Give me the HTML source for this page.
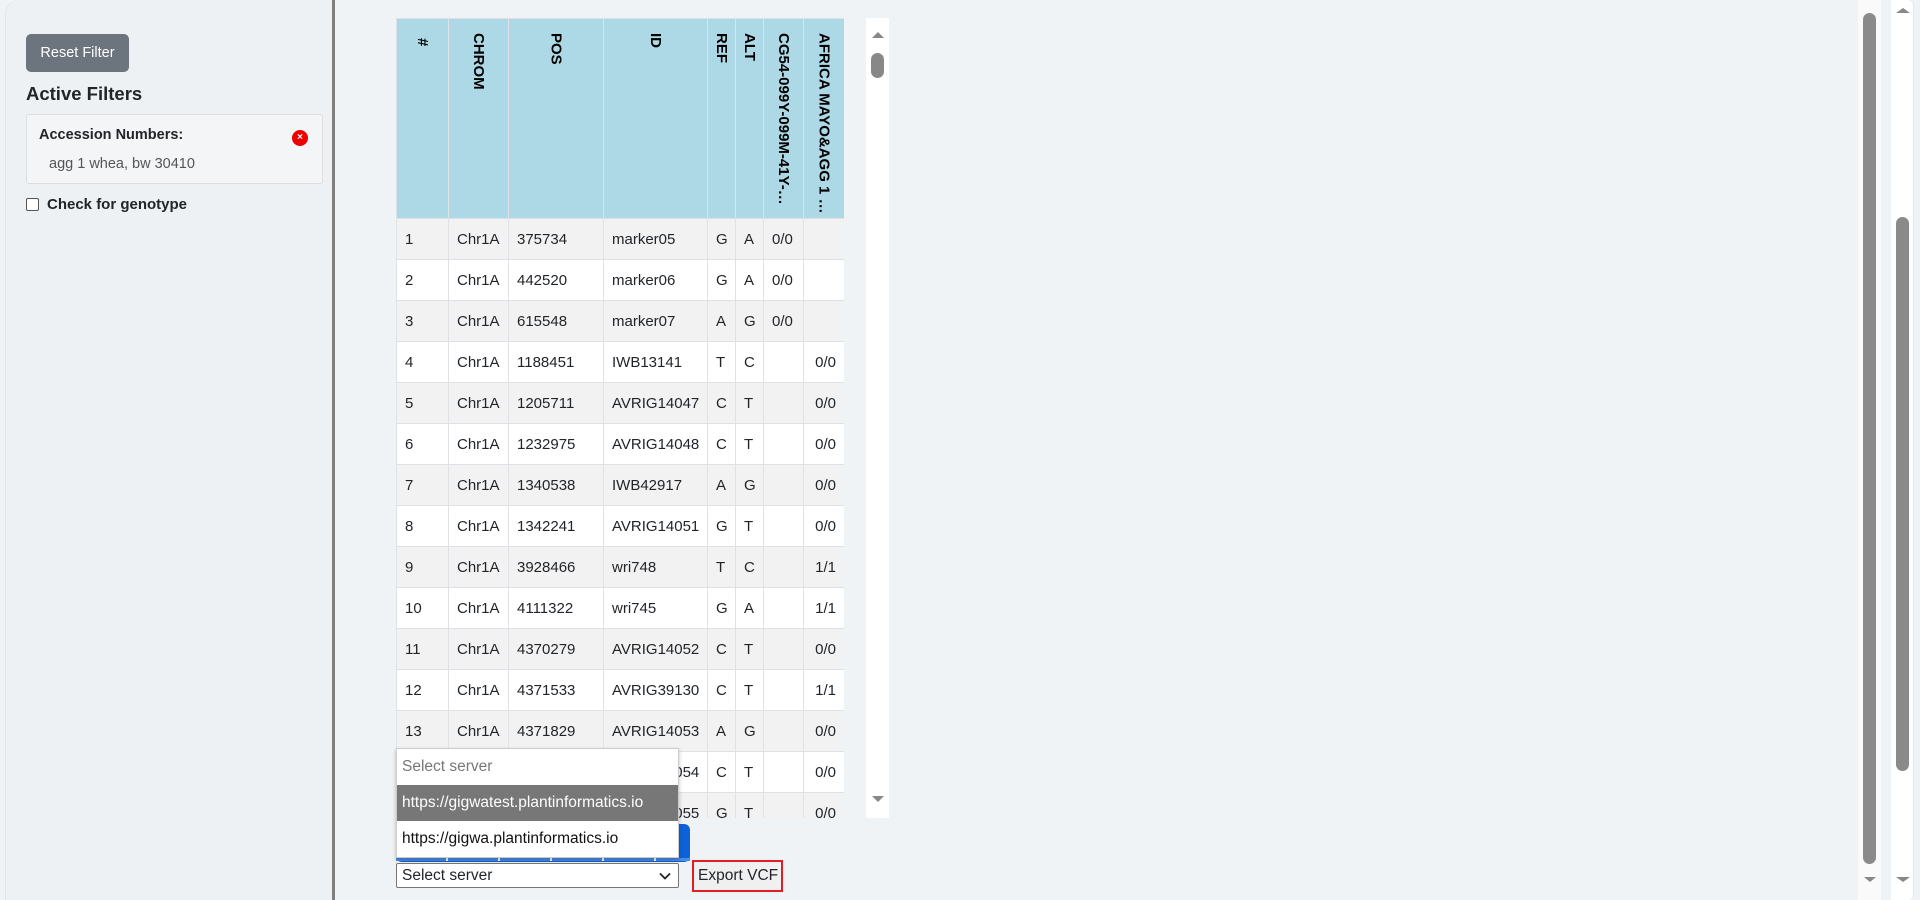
<!DOCTYPE html>
<html><head><meta charset="utf-8"><style>
*{box-sizing:border-box;margin:0;padding:0}
body{width:1920px;height:900px;background:#f0f3f5;font-family:"Liberation Sans",sans-serif;position:relative;overflow:hidden;color:#212529}
.abs{position:absolute}
.side{left:5px;top:0;width:328px;height:900px;background:#eef1f3;border-top-left-radius:14px;border-left:1px solid #e2e5e8}
.divider{left:332px;top:0;width:3px;height:900px;background:#808080}
.btn{left:26px;top:34px;width:103px;height:38px;background:#6c757d;border-radius:5px;color:#fff;font-size:14.5px;line-height:38px;text-align:center}
.card{left:26px;top:114px;width:297px;height:70px;background:#f4f5f6;border:1px solid #dcdfe2;border-radius:3px}
table{border-collapse:collapse;table-layout:fixed;font-size:15px}
td{height:41px;border:1px solid #dee2e6;padding:0 8px;white-space:nowrap;overflow:hidden;color:#212529}
tr:nth-child(even) td{background:#f2f2f2}
tr:nth-child(odd) td{background:#fff}
th{height:200px;background:#add8e6;border:1px solid #dee2e6;vertical-align:top;padding-top:14px;font-size:15px;font-weight:bold;color:#000}
th span{writing-mode:vertical-rl;display:inline-block;white-space:nowrap;max-height:182px;overflow:hidden}
</style></head><body>
<div class="abs side"></div>
<div class="abs divider"></div>
<div class="abs btn">Reset Filter</div>
<div class="abs" style="left:26px;top:83px;font-size:18.5px;font-weight:bold">Active Filters</div>
<div class="abs card"></div>
<div class="abs" style="left:39px;top:127px;font-size:14.5px;font-weight:bold">Accession Numbers:</div>
<div class="abs" style="left:292px;top:130px;width:16px;height:16px;border-radius:50%;background:#e00;color:#fff;font-size:10px;line-height:16px;text-align:center;font-weight:bold">×</div>
<div class="abs" style="left:49px;top:156px;font-size:14.5px;color:#555">agg 1 whea, bw 30410</div>
<div class="abs" style="left:26px;top:198px;width:13px;height:13px;border:1px solid #555;border-radius:2px;background:#fff"></div>
<div class="abs" style="left:47px;top:196px;font-size:15px;font-weight:bold">Check for genotype</div>

<div class="abs" style="left:396px;top:18px;width:448px;height:800px;overflow:hidden">
<table style="width:448px">
<colgroup><col style="width:52px"><col style="width:60px"><col style="width:95px"><col style="width:104px"><col style="width:28px"><col style="width:28px"><col style="width:40px"><col style="width:41px"></colgroup>
<tr><th><span>#</span></th><th><span>CHROM</span></th><th><span>POS</span></th><th><span>ID</span></th><th><span>REF</span></th><th><span>ALT</span></th><th><span>CG54-099Y-099M-41Y-…</span></th><th><span>AFRICA MAYO&amp;AGG 1 …</span></th></tr>
<tr><td>1</td><td>Chr1A</td><td>375734</td><td>marker05</td><td>G</td><td>A</td><td>0/0</td><td></td></tr>
<tr><td>2</td><td>Chr1A</td><td>442520</td><td>marker06</td><td>G</td><td>A</td><td>0/0</td><td></td></tr>
<tr><td>3</td><td>Chr1A</td><td>615548</td><td>marker07</td><td>A</td><td>G</td><td>0/0</td><td></td></tr>
<tr><td>4</td><td>Chr1A</td><td>1188451</td><td>IWB13141</td><td>T</td><td>C</td><td></td><td style="text-align:right">0/0</td></tr>
<tr><td>5</td><td>Chr1A</td><td>1205711</td><td>AVRIG14047</td><td>C</td><td>T</td><td></td><td style="text-align:right">0/0</td></tr>
<tr><td>6</td><td>Chr1A</td><td>1232975</td><td>AVRIG14048</td><td>C</td><td>T</td><td></td><td style="text-align:right">0/0</td></tr>
<tr><td>7</td><td>Chr1A</td><td>1340538</td><td>IWB42917</td><td>A</td><td>G</td><td></td><td style="text-align:right">0/0</td></tr>
<tr><td>8</td><td>Chr1A</td><td>1342241</td><td>AVRIG14051</td><td>G</td><td>T</td><td></td><td style="text-align:right">0/0</td></tr>
<tr><td>9</td><td>Chr1A</td><td>3928466</td><td>wri748</td><td>T</td><td>C</td><td></td><td style="text-align:right">1/1</td></tr>
<tr><td>10</td><td>Chr1A</td><td>4111322</td><td>wri745</td><td>G</td><td>A</td><td></td><td style="text-align:right">1/1</td></tr>
<tr><td>11</td><td>Chr1A</td><td>4370279</td><td>AVRIG14052</td><td>C</td><td>T</td><td></td><td style="text-align:right">0/0</td></tr>
<tr><td>12</td><td>Chr1A</td><td>4371533</td><td>AVRIG39130</td><td>C</td><td>T</td><td></td><td style="text-align:right">1/1</td></tr>
<tr><td>13</td><td>Chr1A</td><td>4371829</td><td>AVRIG14053</td><td>A</td><td>G</td><td></td><td style="text-align:right">0/0</td></tr>
<tr><td>14</td><td>Chr1A</td><td>4371954</td><td>AVRIG14054</td><td>C</td><td>T</td><td></td><td style="text-align:right">0/0</td></tr>
<tr><td>15</td><td>Chr1A</td><td>4372055</td><td>AVRIG14055</td><td>G</td><td>T</td><td></td><td style="text-align:right">0/0</td></tr>
</table></div>
<!-- inner scrollbar -->
<div class="abs" style="left:866px;top:18px;width:23px;height:800px;background:#fff"></div>
<div class="abs" style="left:872px;top:32px;width:0;height:0;border-left:6px solid transparent;border-right:6px solid transparent;border-bottom:6px solid #888"></div>
<div class="abs" style="left:871px;top:53px;width:13px;height:25px;border-radius:7px;background:#888"></div>
<div class="abs" style="left:872px;top:796px;width:0;height:0;border-left:6px solid transparent;border-right:6px solid transparent;border-top:6px solid #888"></div>

<!-- blue buttons behind -->
<div class="abs" style="left:396px;top:824px;width:294px;height:38px;background:#0d62d9;border-radius:6px"></div>
<div class="abs" style="left:396px;top:858px;width:294px;height:3px;background:repeating-linear-gradient(90deg,#4a8de8 0 50px,#fff 50px 52px)"></div>
<!-- dropdown -->
<div class="abs" style="left:396px;top:748px;width:283px;height:110px;background:#fff;border:1px solid #ccc;box-shadow:0 2px 4px rgba(0,0,0,.25);font-size:15.5px">
<div style="height:36px;line-height:36px;padding-left:5px;color:#777">Select server</div>
<div style="height:36px;line-height:36px;padding-left:5px;background:#777;color:#fff">https://gigwatest.plantinformatics.io</div>
<div style="height:36px;line-height:36px;padding-left:5px;color:#111">https://gigwa.plantinformatics.io</div>
</div>
<div class="abs" style="left:396px;top:863px;width:283px;height:25px;background:#fff;border:1px solid #767676;border-radius:2px;font-size:15.5px;line-height:23px;padding-left:5px">Select server<svg style="position:absolute;right:7px;top:8px" width="12" height="8" viewBox="0 0 12 8"><path d="M1 1.5L6 6.5L11 1.5" fill="none" stroke="#222" stroke-width="1.8"/></svg></div>
<div class="abs" style="left:692px;top:860px;width:91px;height:32px;border:2px solid #e21d24;font-size:15.5px;line-height:28px;padding-left:4px;background:#f0f0f0">Export VCF</div>

<!-- page scrollbars -->
<div class="abs" style="left:1858px;top:0;width:23px;height:900px;background:#fafafa"></div>
<div class="abs" style="left:1863px;top:13px;width:13px;height:851px;border-radius:7px;background:#8a8a8a"></div>
<div class="abs" style="left:1864px;top:877px;border-left:6px solid transparent;border-right:6px solid transparent;border-top:5px solid #888"></div>
<div class="abs" style="left:1891px;top:0;width:23px;height:900px;background:#fff;border-radius:0 6px 6px 0;border-right:1px solid #e6e6e6"></div>
<div class="abs" style="left:1896px;top:8px;border-left:7px solid transparent;border-right:7px solid transparent;border-bottom:5px solid #888"></div>
<div class="abs" style="left:1896px;top:217px;width:13px;height:554px;border-radius:7px;background:#8a8a8a"></div>
<div class="abs" style="left:1896px;top:877px;border-left:7px solid transparent;border-right:7px solid transparent;border-top:5px solid #888"></div>
</body></html>
